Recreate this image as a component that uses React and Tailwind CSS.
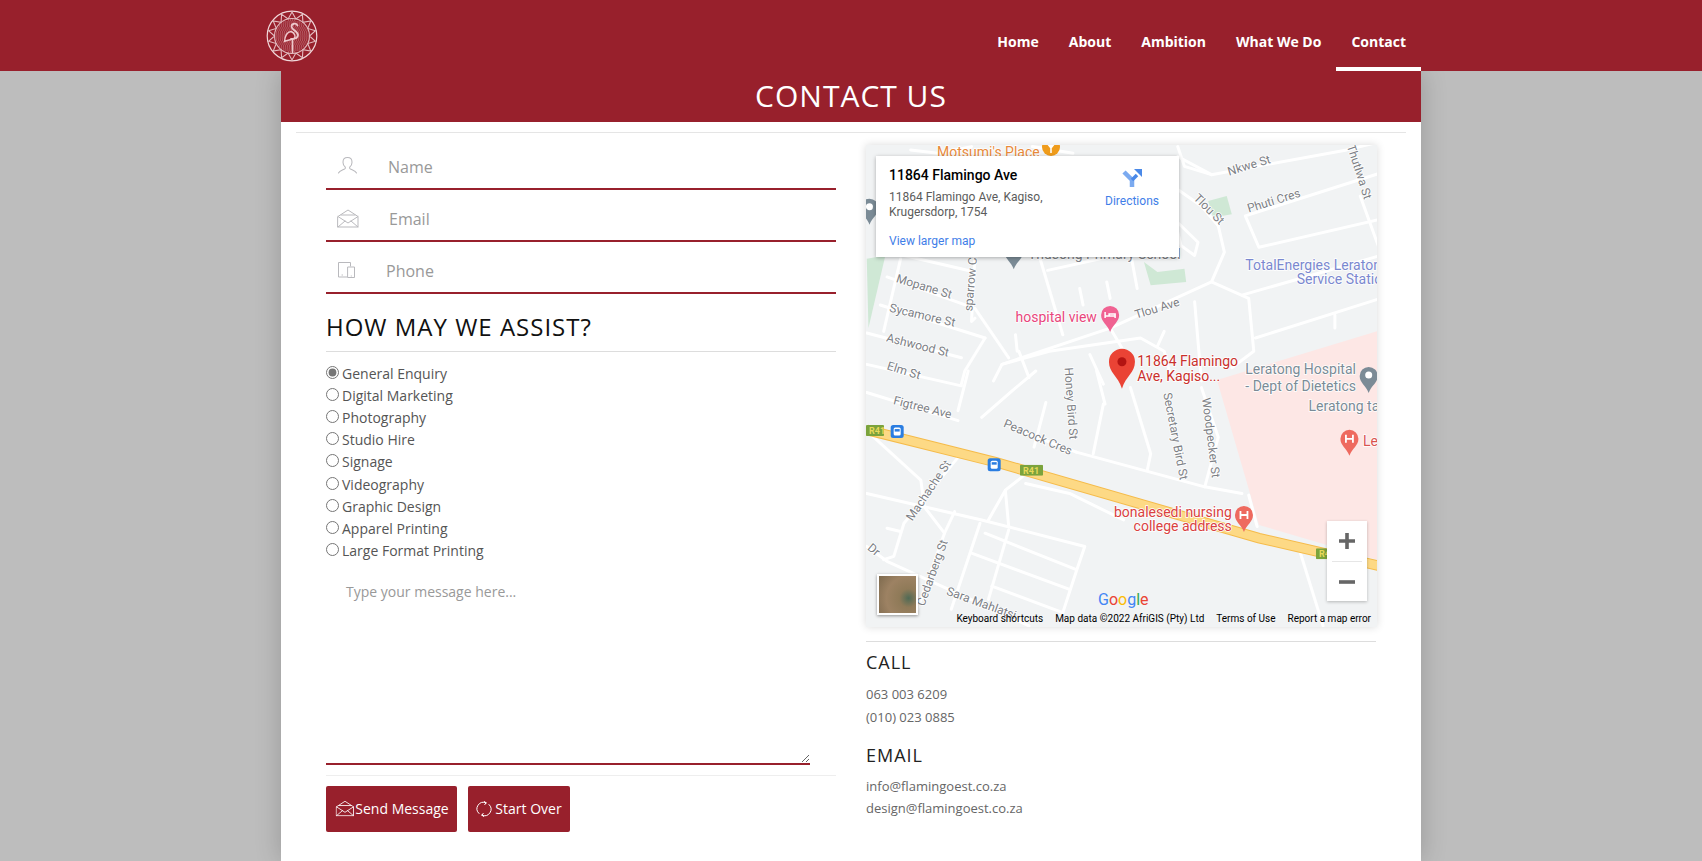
import React from "react";

const px = (x) => 860 + 0.338 * x;
const py = (z, y) => (z === 6 ? 140 + 0.33 * y : 371 + 0.331 * y);

const roads6 = [
  [[940, 50], [1040, 105], [1440, 30], [1540, 5]],
  [[940, 150], [1010, 200], [1060, 260], [1078, 340], [1040, 430], [740, 570], [420, 680], [395, 730]],
  [[1040, 430], [1150, 480], [1165, 640], [1100, 690]],
  [[1130, 470], [1540, 350]],
  [[1170, 600], [1540, 480]],
  [[1405, 530], [1405, 570]],
  [[1540, 100], [1140, 230], [1180, 325], [1540, 240]],
  [[1480, 170], [1540, 340]],
  [[555, 395], [800, 340]],
  [[530, 350], [600, 590]],
  [[800, 340], [820, 450]],
  [[650, 450], [660, 500]],
  [[730, 430], [740, 480]],
  [[740, 570], [775, 630]],
  [[420, 680], [560, 640], [830, 600], [900, 640], [920, 720]],
  [[900, 580], [880, 625]],
  [[80, 415], [340, 510], [440, 660]],
  [[60, 500], [370, 600]],
  [[20, 585], [300, 660]],
  [[340, 350], [330, 550], [340, 540]],
  [[120, 360], [70, 580]],
  [[130, 350], [340, 400]],
  [[370, 600], [310, 700], [300, 740]],
  [[470, 640], [500, 720]],
  [[680, 650], [720, 740]],
  [[990, 490], [1010, 730]],
  [[460, 590], [465, 640]],
  [[930, 240], [1000, 310], [990, 350], [950, 320], [930, 240]],
  [[940, 20], [960, 80], [1040, 105]],
  [[150, 30], [230, 40], [330, 20]],
  [[510, 20], [630, 40]],
  [[20, 680], [300, 745]],
];
const roads7 = [
  [[320, 0], [290, 120]],
  [[20, 65], [290, 150]],
  [[360, 140], [450, 60], [520, 0]],
  [[720, 100], [690, 250]],
  [[700, 0], [725, 100]],
  [[550, 95], [515, 230]],
  [[800, 50], [860, 250], [850, 300]],
  [[640, 245], [1020, 350], [1130, 370]],
  [[445, 170], [640, 245]],
  [[1010, 50], [1060, 200], [1020, 350]],
  [[295, 255], [130, 460], [100, 560], [70, 570]],
  [[30, 190], [180, 330], [190, 405]],
  [[20, 370], [190, 410], [360, 450], [665, 530], [640, 605], [600, 730]],
  [[440, 480], [380, 690]],
  [[355, 460], [270, 720]],
  [[370, 490], [640, 600]],
  [[330, 550], [620, 660]],
  [[390, 650], [600, 730]],
  [[280, 425], [250, 490], [170, 720]],
  [[190, 410], [250, 490]],
  [[20, 530], [80, 575], [500, 770]],
  [[80, 475], [120, 485]],
  [[480, 320], [430, 360], [380, 450]],
  [[430, 360], [440, 470]],
  [[490, 340], [620, 370], [780, 450]],
  [[1300, 540], [1370, 770]],
  [[1150, 375], [1175, 470]],
];

const G = "#7c8085";
const labels = [
  { t: "Motsumi's Place", z: 6, x: 228, y: 50, c: "#e8893a", s: 14 },
  { t: "Nkwe St", z: 6, x: 1092, y: 108, r: -17, c: G },
  { t: "Thutlwa St", z: 6, x: 1440, y: 18, r: 72, c: G },
  { t: "Tlou St", z: 6, x: 985, y: 178, r: 45, c: G },
  { t: "Phuti Cres", z: 6, x: 1150, y: 220, r: -17, c: G },
  { t: "TotalEnergies Leratong", z: 6, x: 1140, y: 394, c: "#7a88cf", s: 14 },
  { t: "Service Station", z: 6, x: 1292, y: 436, c: "#7a88cf", s: 14 },
  { t: "Thusong Primary School", z: 6, x: 497, y: 360, c: G, s: 14 },
  { t: "Mopane St", z: 6, x: 105, y: 430, r: 17, c: G },
  { t: "Sycamore St", z: 6, x: 85, y: 520, r: 13, c: G },
  { t: "Ashwood St", z: 6, x: 76, y: 610, r: 14, c: G },
  { t: "Elm St", z: 6, x: 78, y: 695, r: 17, c: G },
  { t: "sparrow Cres", z: 6, x: 332, y: 520, r: -85, c: G },
  { t: "hospital view", z: 6, x: 460, y: 553, c: "#e8467c", s: 14 },
  { t: "Tlou Ave", z: 6, x: 817, y: 542, r: -17, c: G },
  { t: "11864 Flamingo", z: 6, x: 820, y: 686, c: "#c9302c", s: 14 },
  { t: "Ave, Kagiso...", z: 6, x: 820, y: 731, c: "#c9302c", s: 14 },
  { t: "Leratong Hospital", z: 6, x: 1140, y: 708, c: "#7b8b96", s: 14 },
  { t: "- Dept of Dietetics", z: 7, x: 1140, y: 60, c: "#7b8b96", s: 14 },
  { t: "Leratong ta", z: 7, x: 1327, y: 122, c: "#7b8b96", s: 14 },
  { t: "Le", z: 7, x: 1488, y: 226, c: "#d9534f", s: 14 },
  { t: "Honey Bird St", z: 7, x: 605, y: -10, r: 86, c: G },
  { t: "Secretary Bird St", z: 7, x: 897, y: 68, r: 79, c: G },
  { t: "Woodpecker St", z: 7, x: 1012, y: 82, r: 83, c: G },
  { t: "Figtree Ave", z: 7, x: 97, y: 100, r: 14, c: G },
  { t: "Peacock Cres", z: 7, x: 422, y: 168, r: 23, c: G },
  { t: "Machache St", z: 7, x: 155, y: 455, r: -56, c: G },
  { t: "Cedarberg St", z: 7, x: 190, y: 712, r: -70, c: G },
  { t: "Sara Mahlatsi", z: 7, x: 254, y: 675, r: 20, c: G },
  { t: "Dr", z: 7, x: 20, y: 538, r: 40, c: G },
  { t: "bonalesedi nursing", z: 7, x: 1100, y: 440, c: "#d9413f", s: 14, a: "end" },
  { t: "college address", z: 7, x: 1100, y: 482, c: "#d9413f", s: 14, a: "end" },
];

const poly = (z, pts) => pts.map(([x, y]) => `${px(x)},${py(z, y)}`).join(" ");

function Pin({ x, y, c, h }) {
  return (
    <g transform={`translate(${x} ${y})`}>
      <path d="M0 17C-3 9-9 7-9 0a9 9 0 0 1 18 0C9 7 3 9 0 17Z" fill={c} />
      {h === "H" && <path d="M-3.5-4V4M3.5-4V4M-3.5 0H3.5" stroke="#fff" strokeWidth="1.8" fill="none" />}
      {h === "bed" && <path d="M-5-3V3M-5 1H5V3M5 1V-1H-1V1" stroke="#fff" strokeWidth="1.5" fill="none" />}
      {h === "school" && <circle cy="-1" r="3.5" fill="#fff" />}
    </g>
  );
}

function Bus({ x, y }) {
  return (
    <g transform={`translate(${x} ${y})`}>
      <rect x="-6.5" y="-6.5" width="13" height="13" rx="2.5" fill="#2a7de1" />
      <rect x="-3.5" y="-4" width="7" height="8" rx="1.5" fill="#fff" />
      <rect x="-2.5" y="-2.5" width="5" height="2.5" fill="#2a7de1" />
    </g>
  );
}

function Shield({ x, y, w }) {
  return (
    <svg x={x} y={y - 5.5} width={w} height="11" overflow="hidden">
      <rect width={w} height="11" fill="#7ba33c" rx="1" />
      <text x="3" y="9" fontSize="9" fontWeight="700" fill="#e8d95a" fontFamily="Roboto, sans-serif">R41</text>
    </svg>
  );
}

function MapDrawing() {
  return (
    <svg viewBox="866 145 511 482" className="block h-full w-full" role="img" aria-label="Street map around Flamingo Ave, Kagiso">
      <rect x="866" y="145" width="511" height="482" fill="#f1f3f4" />
      <polygon points="1378,331 1217,380 1249,490 1259,525 1378,560" fill="#fde7e5" />
      <polygon points={poly(6, [[1030, 185], [1085, 170], [1100, 225], [1045, 235]])} fill="#cfe8d5" />
      <polygon points={poly(6, [[840, 370], [860, 440], [965, 430], [960, 390], [880, 400]])} fill="#cfe8d5" />
      <polygon points={poly(6, [[20, 360], [75, 350], [25, 570]])} fill="#cfe8d5" />
      <g fill="none" stroke="#fff" strokeWidth="3" strokeLinejoin="round" strokeLinecap="round">
        {roads6.map((r, i) => <polyline key={i} points={poly(6, r)} />)}
        {roads7.map((r, i) => <polyline key={i} points={poly(7, r)} />)}
      </g>
      <polyline points={poly(7, [[20, 178], [400, 275], [1180, 505], [1540, 590]])} fill="none" stroke="#f5bb4a" strokeWidth="10.5" />
      <polyline points={poly(7, [[20, 178], [400, 275], [1180, 505], [1540, 590]])} fill="none" stroke="#fdd985" strokeWidth="8.5" />
      <g fontFamily="Roboto, sans-serif">
        {labels.map((l) => {
          const x = px(l.x);
          const y = py(l.z, l.y);
          return (
            <text
              key={l.t}
              x={x}
              y={y}
              fill={l.c}
              fontSize={l.s || 12}
              textAnchor={l.a || "start"}
              stroke="#fff"
              strokeWidth="1.5"
              paintOrder="stroke"
              transform={l.r ? `rotate(${l.r} ${x} ${y})` : undefined}
            >
              {l.t}
            </text>
          );
        })}
      </g>
      <g transform="translate(1051 147)">
        <circle r="9" fill="#ef9c1c" />
        <path d="M-4-4H4L0 1ZM0 1V6" stroke="#fff" strokeWidth="1.5" fill="#fff" />
      </g>
      <Pin x={px(28)} y={py(6, 205)} c="#7b8b96" h="school" />
      <Pin x={px(455)} y={py(6, 340)} c="#7b8b96" />
      <Pin x={px(740)} y={py(6, 530)} c="#f06292" h="bed" />
      <Pin x={px(1505)} y={py(7, 15)} c="#7b8b96" h="school" />
      <Pin x={px(1448)} y={py(7, 205)} c="#ee6a5f" h="H" />
      <Pin x={px(1136)} y={py(7, 435)} c="#ee6a5f" h="H" />
      <g transform={`translate(${px(775)} ${py(6, 672)})`}>
        <path d="M0 27C-4 14-13 11-13 0a13 13 0 0 1 26 0C13 11 4 14 0 27Z" fill="#ea4335" />
        <circle r="4.5" fill="#b31412" />
      </g>
      <Shield x={866} y={py(7, 180)} w={18} />
      <Shield x={1020} y={py(7, 300)} w={23} />
      <Shield x={1316} y={py(7, 552)} w={11} />
      <Bus x={px(110)} y={py(7, 183)} />
      <Bus x={px(397)} y={py(7, 283)} />
      <text x="1098" y="605" fontSize="16" fontFamily="Roboto, sans-serif">
        <tspan fill="#4285f4">G</tspan>
        <tspan fill="#ea4335">o</tspan>
        <tspan fill="#fbbc05">o</tspan>
        <tspan fill="#4285f4">g</tspan>
        <tspan fill="#34a853">l</tspan>
        <tspan fill="#ea4335">e</tspan>
      </text>
    </svg>
  );
}

function Logo() {
  const teeth = [];
  const N = 14;
  for (let i = 0; i < N * 2; i++) {
    const a = (i * Math.PI) / N;
    const r = i % 2 ? 17.5 : 24;
    teeth.push(`${(26 + r * Math.sin(a)).toFixed(2)},${(26 - r * Math.cos(a)).toFixed(2)}`);
  }
  return (
    <svg width="52" height="52" viewBox="0 0 52 52" className="mt-[10px] -ml-[15px] block shrink-0" aria-label="Flamingo logo">
      <circle cx="26" cy="26" r="24.8" fill="none" stroke="#f0d8da" strokeWidth="1.2" />
      <polygon points={teeth.join(" ")} fill="none" stroke="#e3bcc0" strokeWidth="1.1" />
      <circle cx="26" cy="26" r="17.5" fill="none" stroke="#e3bcc0" strokeWidth="1.1" />
      <g stroke="#c9868d" strokeWidth="1" strokeDasharray="1.2 0.8">
        {[10, 12, 14, 16, 18, 20, 22, 24, 26, 28, 30, 32, 34, 36, 38, 40, 42].map((y) => {
          const d = Math.sqrt(Math.max(0, 272 - (y - 26) * (y - 26)));
          return <line key={y} x1={26 - d} x2={26 + d} y1={y} y2={y} />;
        })}
      </g>
      <path d="M25 21.5C21 22 19 26 18.5 31.5 21 30 25 30 28 28.5 30 27 29 23 25 21.5Z" fill="#98202c" stroke="#eec9cd" strokeWidth="1.4" />
      <path d="M31.5 15.5C30 12.5 25.5 13.5 25.5 16.5 25.5 20 32 21 32 25 32 28 28 29 25 29" fill="none" stroke="#eec9cd" strokeWidth="1.8" strokeLinecap="round" />
      <path d="M26.5 29V43" stroke="#eec9cd" strokeWidth="1.6" fill="none" />
    </svg>
  );
}

const line = { fill: "none", stroke: "currentColor", strokeWidth: 1, strokeLinejoin: "round", strokeLinecap: "round" };

const UserIcon = () => (
  <svg width="21" height="21" viewBox="0 0 20 20" {...line}>
    <path d="M10 1.5c-2.8 0-4.3 2-4.3 4.4 0 2 1 3.6 2 4.5.4.5.4 1.4-.3 1.9-1.6 1-5 1.6-6 3.9M10 1.5c2.8 0 4.3 2 4.3 4.4 0 2-1 3.6-2 4.5-.4.5-.4 1.4.3 1.9 1.6 1 5 1.6 6 3.9" />
  </svg>
);
const MailIcon = () => (
  <svg width="22" height="19" viewBox="0 0 22 19" {...line}>
    <path d="M1 7.5 11 1l10 6.5V18H1Z" />
    <path d="M1 7.5 11 14l10-6.5M1 18l7-6M21 18l-7-6M4 6h14" />
  </svg>
);
const DeviceIcon = () => (
  <svg width="19" height="19" viewBox="0 0 19 19" {...line}>
    <path d="M10 16H1.5V1.5H13.5V5" />
    <rect x="11" y="6" width="6.5" height="10.5" />
    <path d="M5 14h.5M14.2 15h.2" />
  </svg>
);
const RefreshIcon = () => (
  <svg width="16" height="16" viewBox="0 0 16 16" {...line}>
    <path d="M3 12.5A6.5 6.5 0 0 1 10 1.8M13 3.5a6.5 6.5 0 0 1-7 10.7M10 1.8 8.5.5M10 1.8 8.8 3.6M6 14.2l1.5 1.3M6 14.2l1.2-1.8" />
  </svg>
);

const NAV = ["Home", "About", "Ambition", "What We Do", "Contact"];
const OPTIONS = ["General Enquiry", "Digital Marketing", "Photography", "Studio Hire", "Signage", "Videography", "Graphic Design", "Apparel Printing", "Large Format Printing"];

function Field({ icon, placeholder, type, gap }) {
  return (
    <div className="mb-[8px] flex h-[44px] items-center border-b-2 border-[#98202c] pl-[11px]">
      <span className="-mt-[2px] text-[#b9b9bd]">{icon}</span>
      <input type={type} placeholder={placeholder} className="min-w-0 flex-1 bg-transparent text-[16px] text-[#555] outline-none placeholder:text-[#999]" style={{ marginLeft: gap }} />
    </div>
  );
}

export default function App() {
  return (
    <div className="h-screen overflow-hidden bg-[#bdbdbd] font-['Open_Sans',sans-serif]">
      <header className="relative z-10 h-[71px] bg-[#98202c]">
        <div className="mx-auto flex h-full w-[1140px] justify-between">
          <Logo />
          <nav className="flex">
            {NAV.map((n) => (
              <a key={n} href="#" className={`flex h-full items-start border-b-4 px-[15px] pt-[32px] text-[14px] leading-[20px] font-bold text-white ${n === "Contact" ? "border-white" : "border-transparent"}`}>
                {n}
              </a>
            ))}
          </nav>
        </div>
      </header>
      <main className="relative mx-auto h-[790px] w-[1140px] bg-white shadow-[0_0_25px_rgba(0,0,0,0.2)]">
        <h1 className="flex h-[51px] items-center justify-center bg-[#98202c] pb-[3px] text-[30px] tracking-[1px] text-white">CONTACT US</h1>
        <div className="mx-[15px] mt-[10px] border-t border-[#e5e5e5]" />
        <div className="grid grid-cols-2 gap-[30px] px-[45px]">
          <form className="pt-[13px]">
            <Field icon={<UserIcon />} placeholder="Name" type="text" gap="30px" />
            <Field icon={<MailIcon />} placeholder="Email" type="email" gap="30px" />
            <Field icon={<DeviceIcon />} placeholder="Phone" type="tel" gap="30px" />
            <h2 className="mt-[16px] text-[24px] leading-[33px] tracking-[1px] text-[#111]">HOW MAY WE ASSIST?</h2>
            <div className="mt-[8px] border-t border-[#ddd]" />
            <div className="mt-[10px]">
              {OPTIONS.map((o, i) => (
                <label key={o} className="flex h-[22.2px] items-center text-[14px] text-[#555]">
                  <input type="radio" name="topic" defaultChecked={i === 0} className="m-0 -mt-[2px] mr-[3px] h-[13px] w-[13px] accent-[#757575]" />
                  {o}
                </label>
              ))}
            </div>
            <textarea placeholder="Type your message here..." className="mt-[9px] block h-[194px] w-[484px] border-b-2 border-[#98202c] bg-transparent px-[20px] py-[10px] text-[14px] text-[#555] outline-none placeholder:text-[#999]" />
            <div className="mt-[10px] border-t border-[#eee]" />
            <div className="mt-[10px] flex gap-[11px]">
              <button type="button" className="flex h-[46px] w-[131px] items-center justify-center gap-[3px] rounded-[2px] bg-[#98202c] text-[14px] text-white">
                <span className="scale-[0.85]"><MailIcon /></span>
                <span className="-ml-[4px]">Send Message</span>
              </button>
              <button type="button" className="flex h-[46px] w-[102px] items-center justify-center gap-[3px] rounded-[2px] bg-[#98202c] text-[14px] text-white">
                <RefreshIcon />
                Start Over
              </button>
            </div>
          </form>
          <section className="pt-[12px]">
            <div className="relative h-[482px] w-[511px] overflow-hidden shadow-[0_0_8px_rgba(0,0,0,0.15)]">
              <MapDrawing />
              <div className="absolute top-[11px] left-[10px] flex h-[101px] w-[303px] bg-white px-[13px] pt-[9px] font-['Roboto',sans-serif] shadow-[0_1px_4px_rgba(0,0,0,0.3)]">
                <div className="w-[200px]">
                  <div className="text-[14px] leading-[20px] font-medium text-black">11864 Flamingo Ave</div>
                  <div className="mt-[5px] text-[12px] leading-[15px] text-[#5b5b5b]">11864 Flamingo Ave, Kagiso,<br />Krugersdorp, 1754</div>
                  <a href="#" className="mt-[14px] block text-[12px] leading-[15px] text-[#3f7ee8]">View larger map</a>
                </div>
                <div className="flex flex-1 flex-col items-center pl-[9px]">
                  <svg width="22" height="22" viewBox="0 0 22 22" className="mt-[2px]" aria-hidden="true">
                    <path d="M11 20V13L3 5" fill="none" stroke="#7baaf0" strokeWidth="4.5" />
                    <path d="M11 13 16 8" fill="none" stroke="#4a89e8" strokeWidth="3.5" />
                    <path d="M13 2h8v8Z" fill="#4a89e8" />
                  </svg>
                  <a href="#" className="mt-[5px] text-[12px] leading-[15px] text-[#3f7ee8]">Directions</a>
                </div>
              </div>
              <div className="absolute top-[376px] right-[10px] flex h-[80px] w-[40px] flex-col items-center bg-white shadow-[0_1px_3px_rgba(0,0,0,0.25)]">
                <svg width="40" height="40" viewBox="0 0 40 40" aria-label="Zoom in"><path d="M20 12V28M12 20H28" stroke="#666" strokeWidth="3.6" /></svg>
                <div className="w-[30px] border-t border-[#e6e6e6]" />
                <svg width="40" height="39" viewBox="0 0 40 39" aria-label="Zoom out"><path d="M12 20H28" stroke="#666" strokeWidth="3.6" /></svg>
              </div>
              <div className="absolute top-[429px] left-[11px] h-[41px] w-[41px] border-2 border-white bg-[radial-gradient(circle_at_80%_60%,#4f6a55_0,#8f7a58_25%,#9d8263_60%,#7d6a4e_100%)] shadow-[0_1px_3px_rgba(0,0,0,0.4)]" />
              <div className="absolute right-[6px] bottom-[2px] flex gap-[12px] font-['Roboto',sans-serif] text-[10px] leading-[12px] text-black">
                <span>Keyboard shortcuts</span>
                <span>Map data ©2022 AfriGIS (Pty) Ltd</span>
                <span>Terms of Use</span>
                <span>Report a map error</span>
              </div>
            </div>
            <div className="mt-[14px] border-t border-[#ddd]" />
            <h3 className="mt-[8px] text-[18px] leading-[24px] tracking-[1px] text-[#222]">CALL</h3>
            <p className="mt-[9px] text-[13px] leading-[22.8px] text-[#666]">063 003 6209<br />(010) 023 0885</p>
            <h3 className="mt-[14px] text-[18px] leading-[24px] tracking-[1px] text-[#222]">EMAIL</h3>
            <p className="mt-[8px] text-[13px] leading-[22.8px] text-[#666]">info@flamingoest.co.za<br />design@flamingoest.co.za</p>
          </section>
        </div>
      </main>
    </div>
  );
}
